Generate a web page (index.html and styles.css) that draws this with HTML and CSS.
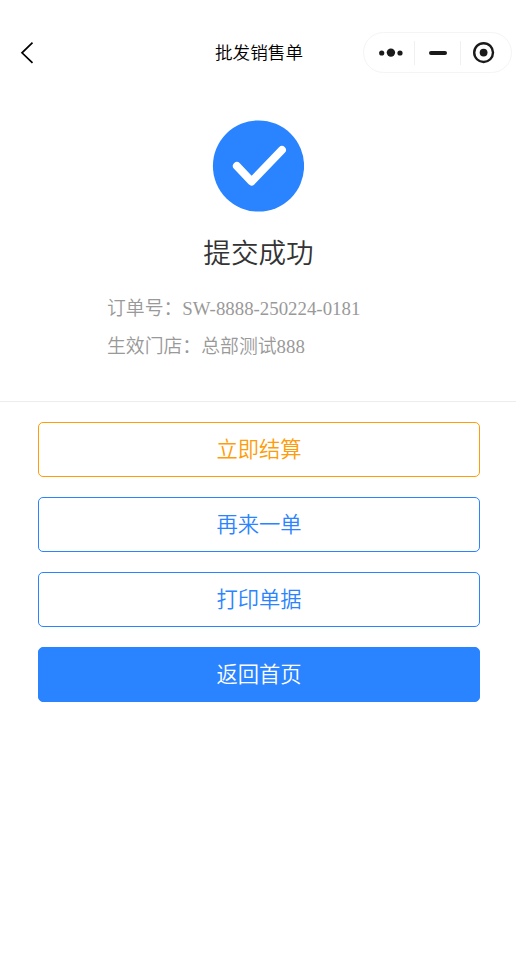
FILE: index.html
```html
<!DOCTYPE html>
<html lang="zh-CN">
<head>
  <meta charset="UTF-8">
  <meta name="viewport" content="width=device-width, initial-scale=1.0">
  <title>批发销售单</title>
  <link rel="stylesheet" href="styles.css">
</head>
<body>
  <header class="navbar">
    <button class="back-button" aria-label="返回">
      <svg width="14" height="22" viewBox="0 0 14 22">
        <path d="M12.5 0.7 L2 10.8 L12.5 20.9" fill="none" stroke="#000" stroke-width="1.7"/>
      </svg>
    </button>
    <h1 class="navbar-title">批发销售单</h1>
    <div class="capsule">
      <span class="capsule-item">
        <svg width="26" height="12" viewBox="0 0 26 12">
          <circle cx="3.7" cy="6" r="2.6"/>
          <circle cx="12.9" cy="5.6" r="4.2"/>
          <circle cx="22" cy="6" r="2.6"/>
        </svg>
      </span>
      <span class="capsule-item">
        <svg width="18" height="4" viewBox="0 0 18 4">
          <rect width="18" height="4" rx="2"/>
        </svg>
      </span>
      <span class="capsule-item">
        <svg width="22" height="22" viewBox="0 0 22 22">
          <circle cx="10.6" cy="10.6" r="9.4" fill="none" stroke="#1a1a1a" stroke-width="2.4"/>
          <circle cx="10.6" cy="10.6" r="3.9"/>
        </svg>
      </span>
    </div>
  </header>

  <!-- 提交结果 -->
  <main class="result">
    <svg class="result-icon" width="92" height="92" viewBox="0 0 92 92">
      <circle cx="46.5" cy="46" r="45.6" fill="#2a83ff"/>
      <path d="M24.9 46 L39.6 61.5 L69.9 30" fill="none" stroke="#fff" stroke-width="8" stroke-linecap="round" stroke-linejoin="round"/>
    </svg>
    <h2 class="result-title">提交成功</h2>
    <div class="result-info">
      <p>订单号：SW-8888-250224-0181</p>
      <p>生效门店：总部测试888</p>
    </div>
  </main>

  <!-- 操作按钮 -->
  <div class="actions">
    <button class="action-button action-warning">立即结算</button>
    <button class="action-button">再来一单</button>
    <button class="action-button">打印单据</button>
    <button class="action-button action-primary">返回首页</button>
  </div>
</body>
</html>
```

FILE: styles.css
```css
body {
  margin: 0;
  min-height: 100vh;
  background-color: #fff;
  font-family: "Liberation Serif", "Noto Sans CJK SC", serif;
  font-weight: 350;
}

h1,
h2,
p {
  margin: 0;
  font-weight: inherit;
}

button {
  font-family: inherit;
  font-weight: inherit;
  cursor: pointer;
}

.navbar {
  display: grid;
  grid-template-columns: 1fr auto 1fr;
  align-items: center;
  height: 41px;
  padding: 32px 4px 0;
}

.back-button {
  display: flex;
  justify-self: start;
  margin-left: 16px;
  padding: 0;
  border: none;
  background: none;
}

.navbar-title {
  margin-left: 2px;
  font-size: 17.6px;
  line-height: 24px;
  color: #000;
}

.capsule {
  display: flex;
  justify-self: end;
  align-items: center;
  box-sizing: border-box;
  width: 149px;
  height: 41px;
  padding: 0 4px;
  border: 1px solid #f4f4f4;
  border-radius: 21px;
}

.capsule-item {
  display: flex;
  flex: 1;
  align-items: center;
  justify-content: center;
  height: 24px;
  fill: #1a1a1a;
}

.capsule-item + .capsule-item {
  border-left: 1px solid #f0f0f0;
}

.result {
  display: flex;
  flex-direction: column;
  align-items: center;
  padding: 47px 0 35px;
  border-bottom: 1px solid #ececec;
}

.result-title {
  margin: 22px 0 0 1px;
  font-size: 27.6px;
  line-height: 40px;
  color: #333;
}

.result-info {
  align-self: stretch;
  margin-top: 16px;
  padding-left: 107px;
  font-size: 18.85px;
  line-height: 38px;
  color: #999;
}

.actions {
  display: flex;
  flex-direction: column;
  gap: 20px;
  padding: 20px 36px 0 38px;
}

.action-button {
  height: 55px;
  padding: 0 0 4px;
  border: 1px solid #2a83ff;
  border-radius: 5px;
  background-color: #fff;
  font-size: 21.3px;
  color: #2a83ff;
}

.action-warning {
  border-color: #ff9c07;
  color: #ff9c07;
}

.action-primary {
  background-color: #2a83ff;
  color: #fff;
}
```
